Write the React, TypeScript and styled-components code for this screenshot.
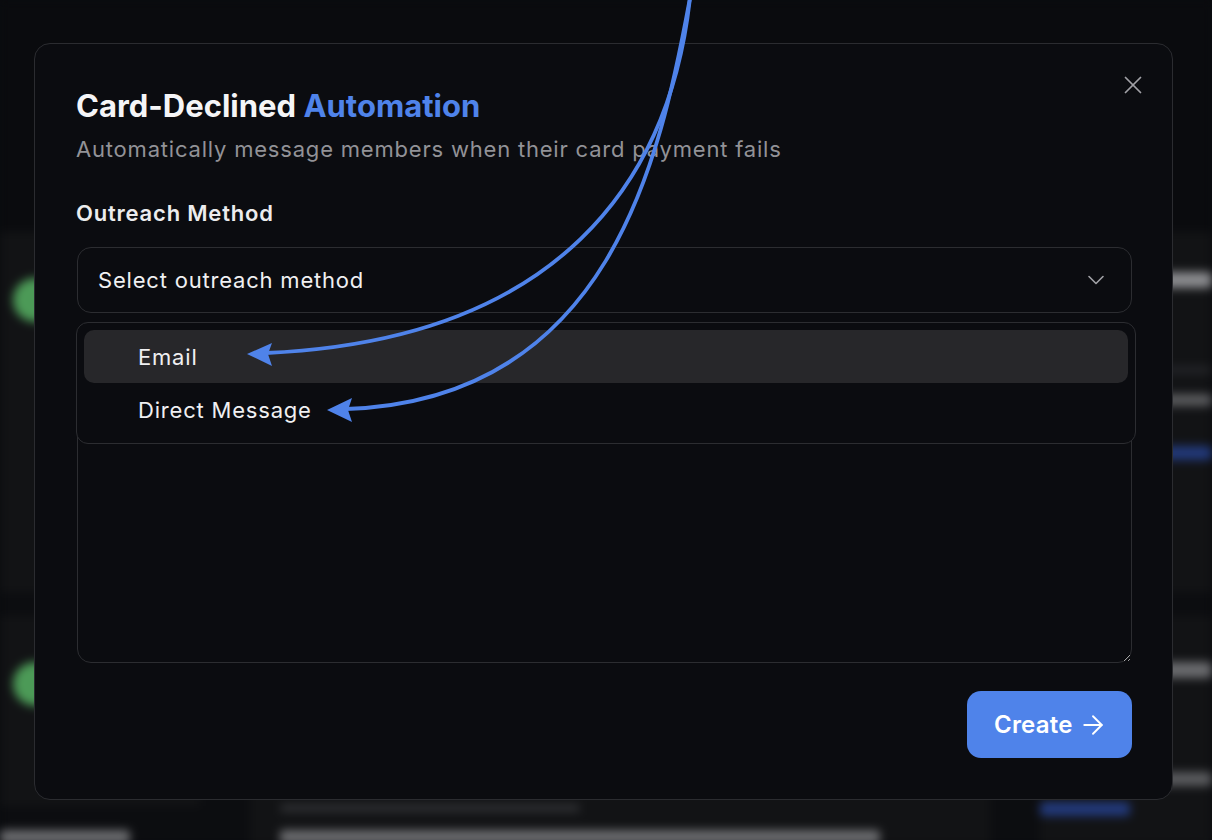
import React from 'react';
import styled, { createGlobalStyle } from 'styled-components';
import { X, ChevronDown, ArrowRight } from 'lucide-react';

const GlobalStyle = createGlobalStyle`
  html, body {
    margin: 0;
    padding: 0;
    background: #0a0b0e;
  }
  body {
    font-family: Inter, "Noto Sans", sans-serif;
    -webkit-font-smoothing: antialiased;
  }
  * { box-sizing: border-box; }
`;

const Screen = styled.div`
  position: relative;
  width: 1212px;
  height: 840px;
  overflow: hidden;
  background: #0a0b0e;
`;

/* blurred page behind the dialog */
const Backdrop = styled.div`
  display: flex;
  flex-direction: column;
  height: 100%;
  filter: blur(5px);
`;

const TopBar = styled.div`
  height: 232px;
  flex-shrink: 0;
  background: #0a0b0e;
`;

const Columns = styled.div`
  flex: 1;
  display: grid;
  grid-template-columns: 200px 1fr 172px;
  column-gap: 50px;
  background: #0c0d10;
`;

const Column = styled.div`
  display: flex;
  flex-direction: column;
  gap: 24px;
`;

const BgCard = styled.div<{ $h: number; $pl?: number }>`
  height: ${p => p.$h}px;
  flex-shrink: 0;
  background: #121315;
  padding: 0 0 0 ${p => p.$pl ?? 13}px;
  display: flex;
  flex-direction: column;
  align-items: flex-start;
`;

const Avatar = styled.div`
  width: 44px;
  height: 44px;
  margin-top: 46px;
  border-radius: 50%;
  background: #4c9a57;
`;

const BgLine = styled.div<{ $w: number; $top: number; $color: string; $h?: number }>`
  width: ${p => p.$w}px;
  height: ${p => p.$h ?? 12}px;
  margin-top: ${p => p.$top}px;
  border-radius: 4px;
  background: ${p => p.$color};
  flex-shrink: 0;
`;

const Modal = styled.div`
  position: absolute;
  left: 34px;
  top: 43px;
  width: 1139px;
  height: 757px;
  background: #0b0c10;
  border: 1px solid #2b2c30;
  border-radius: 16px;
  padding: 44px 40px 41px 42px;
  display: flex;
  flex-direction: column;
`;

const CloseButton = styled.button`
  position: absolute;
  top: 26px;
  right: 24px;
  width: 30px;
  height: 30px;
  padding: 0;
  border: none;
  background: transparent;
  color: #a1a1a6;
  display: flex;
  align-items: center;
  justify-content: center;
`;

const Title = styled.h2`
  margin: 0 0 0 -1px;
  font-size: 31px;
  line-height: 36px;
  font-weight: 700;
  color: #f5f5f7;
`;

const Accent = styled.span`
  color: #4f83ea;
`;

const Subtitle = styled.p`
  margin: 11px 0 0 -1px;
  font-size: 22px;
  line-height: 28px;
  letter-spacing: 0.8px;
  color: #929297;
`;

const Label = styled.div`
  margin: 36px 0 0 -1px;
  font-size: 22px;
  line-height: 28px;
  font-weight: 600;
  letter-spacing: 0.8px;
  color: #ececee;
`;

const SelectWrap = styled.div`
  position: relative;
  margin-top: 20px;
  z-index: 2;
`;

const SelectTrigger = styled.div`
  height: 66px;
  border: 1px solid #2c2d31;
  border-radius: 14px;
  padding: 0 21px 0 20px;
  display: flex;
  align-items: center;
  justify-content: space-between;
  font-size: 22px;
  letter-spacing: 0.8px;
  color: #f0f0f2;
`;

const Popover = styled.div`
  position: absolute;
  top: calc(100% + 9px);
  left: -1px;
  right: -4px;
  background: #0b0c10;
  border: 1px solid #2c2d31;
  border-radius: 12px;
  padding: 7px;
`;

const Option = styled.div<{ $active?: boolean }>`
  height: 53px;
  border-radius: 10px;
  padding-left: 54px;
  display: flex;
  align-items: center;
  font-size: 22px;
  letter-spacing: 0.8px;
  color: #f0f0f2;
  background: ${p => (p.$active ? '#27272a' : 'transparent')};
`;

const MessageArea = styled.textarea`
  margin-top: 24px;
  height: 326px;
  width: 100%;
  border: 1px solid #2c2d31;
  border-radius: 14px;
  background: transparent;
  color: #f0f0f2;
  font: 22px Inter, sans-serif;
  padding: 18px 21px;
  resize: vertical;
  outline: none;
`;

const Footer = styled.div`
  margin-top: 28px;
  display: flex;
  justify-content: flex-end;
`;

const CreateButton = styled.button`
  height: 67px;
  width: 165px;
  border: none;
  border-radius: 14px;
  background: #4f83ea;
  color: #ffffff;
  font-family: Inter, sans-serif;
  font-size: 24px;
  font-weight: 600;
  letter-spacing: 0.2px;
  padding: 0 0 0 27px;
  display: flex;
  align-items: center;
  gap: 5px;
`;

const Annotation = styled.svg`
  position: absolute;
  inset: 0;
  pointer-events: none;
  z-index: 5;
`;

export default function App() {
  return (
    <Screen>
      <GlobalStyle />
      <Backdrop>
        <TopBar />
        <Columns>
          <Column>
            <BgCard $h={360}>
              <Avatar />
            </BgCard>
            <BgCard $h={190}>
              <Avatar />
            </BgCard>
            <BgLine $w={130} $top={0} $h={14} $color="#6a6b6e" />
          </Column>
          <Column>
            <BgCard $h={360} />
            <BgCard $h={230} $pl={30}>
              <BgLine $w={300} $top={188} $h={8} $color="#2e2f32" />
              <BgLine $w={600} $top={18} $h={14} $color="#6a6b6e" />
            </BgCard>
          </Column>
          <Column>
            <BgCard $h={360} $pl={0}>
              <BgLine $w={172} $top={40} $h={16} $color="#8a8b8e" />
              <BgLine $w={60} $top={6} $h={8} $color="#3c7a43" />
              <BgLine $w={172} $top={64} $h={8} $color="#232427" />
              <BgLine $w={172} $top={20} $h={12} $color="#5a5b5e" />
              <BgLine $w={172} $top={40} $h={14} $color="#22397a" />
              <BgLine $w={80} $top={74} $h={8} $color="#2e2f32" />
            </BgCard>
            <BgCard $h={230} $pl={0}>
              <BgLine $w={172} $top={46} $h={16} $color="#6a6b6e" />
              <BgLine $w={60} $top={24} $h={8} $color="#3c7a43" />
              <BgLine $w={172} $top={62} $h={14} $color="#5a5b5e" />
              <BgLine $w={90} $top={16} $h={14} $color="#22397a" />
            </BgCard>
          </Column>
        </Columns>
      </Backdrop>

      <Modal>
        <CloseButton aria-label="Close">
          <X size={30} strokeWidth={1.4} />
        </CloseButton>
        <Title>
          Card-Declined <Accent>Automation</Accent>
        </Title>
        <Subtitle>Automatically message members when their card payment fails</Subtitle>
        <Label>Outreach Method</Label>
        <SelectWrap>
          <SelectTrigger>
            <span>Select outreach method</span>
            <ChevronDown size={28} strokeWidth={1.4} color="#a1a1a6" />
          </SelectTrigger>
          <Popover>
            <Option $active>Email</Option>
            <Option>Direct Message</Option>
          </Popover>
        </SelectWrap>
        <MessageArea />
        <Footer>
          <CreateButton>
            Create
            <ArrowRight size={30} strokeWidth={1.5} />
          </CreateButton>
        </Footer>
      </Modal>

      <Annotation width="1212" height="840" viewBox="0 0 1212 840">
        <path d="M 690 -2 C 670 180, 560 340, 266 353" fill="none" stroke="#4f83ea" strokeWidth="3.8" />
        <path d="M 690 -2 C 660 160, 610 400, 346 409" fill="none" stroke="#4f83ea" strokeWidth="3.8" />
        <polygon points="247,354 272,343 268,354 272,366" fill="#4f83ea" />
        <polygon points="327,410 352,398 348,410 352,422" fill="#4f83ea" />
      </Annotation>
    </Screen>
  );
}
